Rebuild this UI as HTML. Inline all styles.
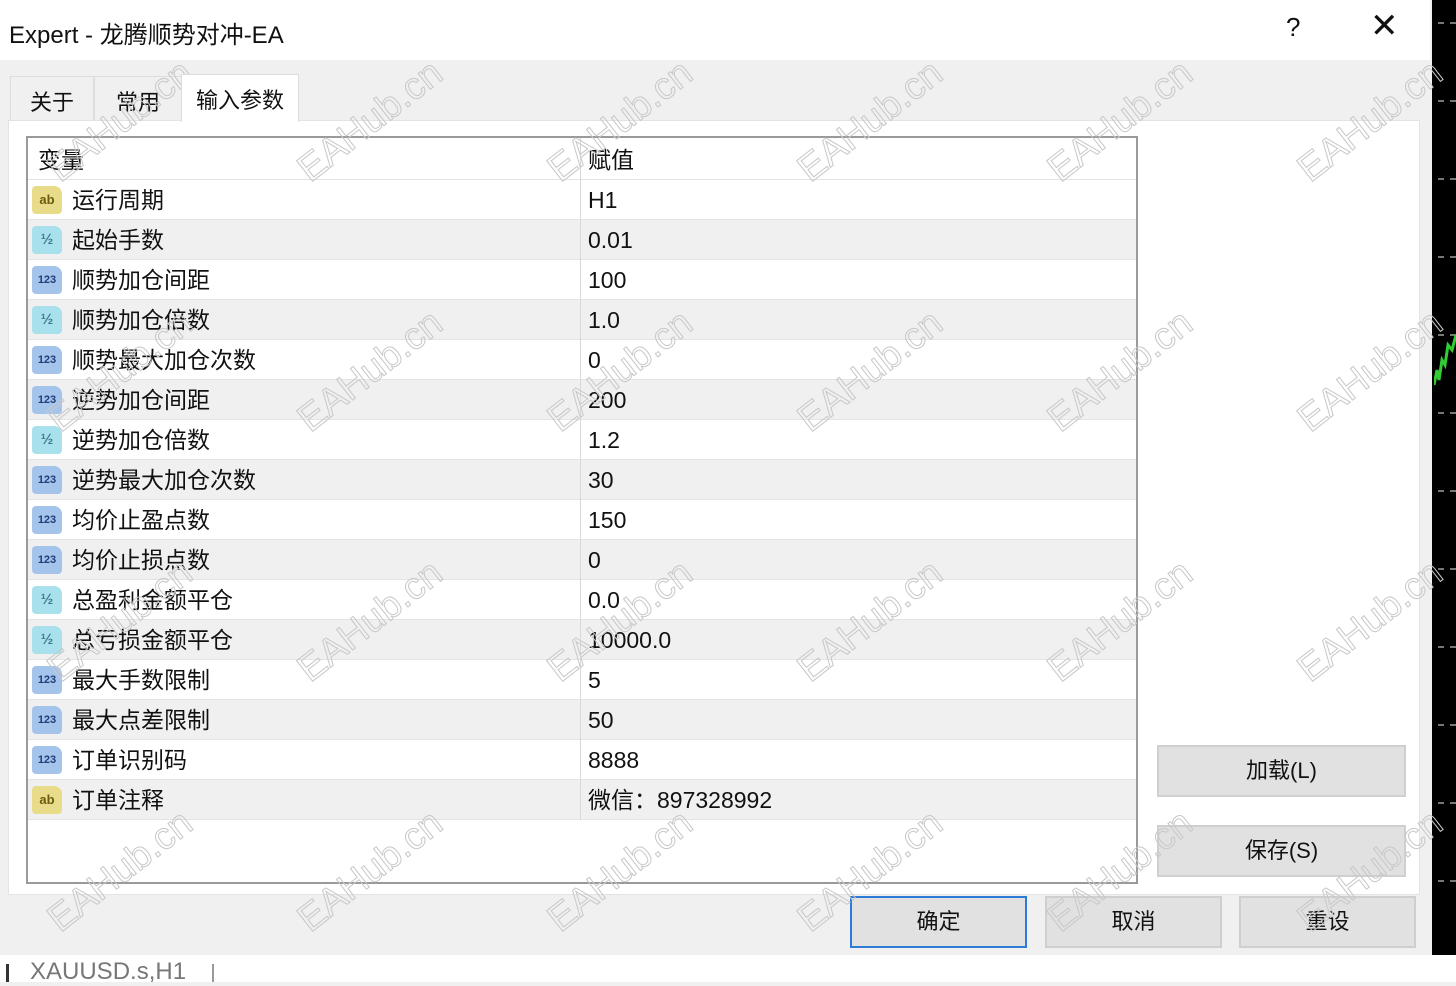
<!DOCTYPE html>
<html><head><meta charset="utf-8"><style>
*{margin:0;padding:0;box-sizing:border-box}
body{width:1456px;height:982px;position:relative;overflow:hidden;background:#f0f0f0;font-family:"Liberation Sans","Noto Sans CJK SC",sans-serif;color:#111}
.abs{position:absolute}
#title{left:0;top:0;width:1430px;height:60px;background:#fff}
#black{left:1432px;top:0;width:24px;height:955px;background:#000}
.dash{position:absolute;left:1438px;width:18px;border-top:2px dashed #777}
#panel{left:8px;top:120px;width:1412px;height:775px;background:#fff;border:1px solid #e3e3e3}
.tab{position:absolute;top:76px;height:45px;font-size:22px;padding-top:8px;text-align:center;background:#f0f0f0;border:1px solid #ddd;border-bottom:none}
#table{left:26px;top:136px;width:1112px;height:748px;border:2px solid #9a9a9a;background:#fff}
.row{position:absolute;left:0;width:1108px;height:40px;font-size:23px;line-height:40px;border-bottom:1px solid #e4e4e4}
.row .n{position:absolute;left:44px;top:0}
.row .v{position:absolute;left:560px;top:0}
.row .div{position:absolute;left:552px;top:0;height:40px;border-left:1px solid #d8d8d8}
.ic{position:absolute;left:4px;top:6px;width:30px;height:28px;border-radius:4px 8px 4px 4px;font-size:13px;font-weight:bold;text-align:center;line-height:28px}
.ab{background:#e8dc8a;color:#6a5c10}
.v2{background:#a8e0ec;color:#3e7f91;font-size:15px}
.n3{background:#a4c4ec;color:#1e3f78;font-size:11px}
.btn{position:absolute;background:#e1e1e1;border:2px solid #cfcfcf;font-size:22px;text-align:center}
.wm{position:absolute;font-size:38px;color:transparent;-webkit-text-stroke:1px #c8c8c8;transform:rotate(-38deg);white-space:nowrap;font-family:"Liberation Sans",sans-serif}
</style></head><body>
<div id="title" class="abs"><span style="position:absolute;left:9px;top:15px;font-size:24px">Expert - 龙腾顺势对冲-EA</span>
<span style="position:absolute;left:1286px;top:12px;font-size:26px">?</span>
<span style="position:absolute;left:1370px;top:6px;font-size:34px;font-weight:200">✕</span></div>
<div id="black" class="abs"></div>
<div class="dash" style="top:22px"></div><div class="dash" style="top:100px"></div><div class="dash" style="top:178px"></div><div class="dash" style="top:256px"></div><div class="dash" style="top:334px"></div><div class="dash" style="top:412px"></div><div class="dash" style="top:490px"></div><div class="dash" style="top:568px"></div><div class="dash" style="top:646px"></div><div class="dash" style="top:724px"></div><div class="dash" style="top:802px"></div><div class="dash" style="top:880px"></div>
<svg class="abs" style="left:1434px;top:330px" width="22" height="60"><polyline points="0,55 3,40 5,50 8,30 11,35 14,15 18,20 22,5" fill="none" stroke="#3c3" stroke-width="3"/></svg>
<div class="tab" style="left:10px;width:84px">关于</div>
<div class="tab" style="left:94px;width:88px">常用</div>
<div class="tab" style="left:181px;top:74px;height:48px;width:118px;background:#fff;z-index:2">输入参数</div>
<div id="panel" class="abs"></div>
<div id="table" class="abs">
<div class="row" style="top:0;height:42px;line-height:44px"><span class="n" style="left:10px">变量</span><span class="v">赋值</span><div class="div" style="height:42px"></div></div>
<div class="row" style="top:42px"><div class="ic ab">ab</div><span class="n">运行周期</span><div class="div"></div><span class="v">H1</span></div>
<div class="row" style="top:82px;background:#f0f0f0"><div class="ic v2">½</div><span class="n">起始手数</span><div class="div"></div><span class="v">0.01</span></div>
<div class="row" style="top:122px"><div class="ic n3">123</div><span class="n">顺势加仓间距</span><div class="div"></div><span class="v">100</span></div>
<div class="row" style="top:162px;background:#f0f0f0"><div class="ic v2">½</div><span class="n">顺势加仓倍数</span><div class="div"></div><span class="v">1.0</span></div>
<div class="row" style="top:202px"><div class="ic n3">123</div><span class="n">顺势最大加仓次数</span><div class="div"></div><span class="v">0</span></div>
<div class="row" style="top:242px;background:#f0f0f0"><div class="ic n3">123</div><span class="n">逆势加仓间距</span><div class="div"></div><span class="v">200</span></div>
<div class="row" style="top:282px"><div class="ic v2">½</div><span class="n">逆势加仓倍数</span><div class="div"></div><span class="v">1.2</span></div>
<div class="row" style="top:322px;background:#f0f0f0"><div class="ic n3">123</div><span class="n">逆势最大加仓次数</span><div class="div"></div><span class="v">30</span></div>
<div class="row" style="top:362px"><div class="ic n3">123</div><span class="n">均价止盈点数</span><div class="div"></div><span class="v">150</span></div>
<div class="row" style="top:402px;background:#f0f0f0"><div class="ic n3">123</div><span class="n">均价止损点数</span><div class="div"></div><span class="v">0</span></div>
<div class="row" style="top:442px"><div class="ic v2">½</div><span class="n">总盈利金额平仓</span><div class="div"></div><span class="v">0.0</span></div>
<div class="row" style="top:482px;background:#f0f0f0"><div class="ic v2">½</div><span class="n">总亏损金额平仓</span><div class="div"></div><span class="v">10000.0</span></div>
<div class="row" style="top:522px"><div class="ic n3">123</div><span class="n">最大手数限制</span><div class="div"></div><span class="v">5</span></div>
<div class="row" style="top:562px;background:#f0f0f0"><div class="ic n3">123</div><span class="n">最大点差限制</span><div class="div"></div><span class="v">50</span></div>
<div class="row" style="top:602px"><div class="ic n3">123</div><span class="n">订单识别码</span><div class="div"></div><span class="v">8888</span></div>
<div class="row" style="top:642px;background:#f0f0f0"><div class="ic ab">ab</div><span class="n">订单注释</span><div class="div"></div><span class="v">微信：897328992</span></div>
</div>
<div class="btn" style="left:1157px;top:745px;width:249px;height:52px;line-height:48px">加载(L)</div>
<div class="btn" style="left:1157px;top:825px;width:249px;height:52px;line-height:48px">保存(S)</div>
<div class="btn" style="left:850px;top:896px;width:177px;height:52px;line-height:48px;border-color:#2c7bd6">确定</div>
<div class="btn" style="left:1045px;top:896px;width:177px;height:52px;line-height:48px">取消</div>
<div class="btn" style="left:1239px;top:896px;width:177px;height:52px;line-height:48px">重设</div>
<div class="abs" style="left:0;top:955px;width:1456px;height:27px;background:#fff"></div>
<div class="abs" style="left:6px;top:964px;width:3px;height:18px;background:#333"></div>
<span class="abs" style="left:30px;top:958px;font-size:24px;color:#777">XAUUSD.s,H1</span>
<div class="abs" style="left:212px;top:964px;width:2px;height:18px;background:#999"></div>
<div class="wm" style="left:35px;top:100px">EAHub.cn</div><div class="wm" style="left:285px;top:100px">EAHub.cn</div><div class="wm" style="left:535px;top:100px">EAHub.cn</div><div class="wm" style="left:785px;top:100px">EAHub.cn</div><div class="wm" style="left:1035px;top:100px">EAHub.cn</div><div class="wm" style="left:1285px;top:100px">EAHub.cn</div>
<div class="wm" style="left:35px;top:350px">EAHub.cn</div><div class="wm" style="left:285px;top:350px">EAHub.cn</div><div class="wm" style="left:535px;top:350px">EAHub.cn</div><div class="wm" style="left:785px;top:350px">EAHub.cn</div><div class="wm" style="left:1035px;top:350px">EAHub.cn</div><div class="wm" style="left:1285px;top:350px">EAHub.cn</div>
<div class="wm" style="left:35px;top:600px">EAHub.cn</div><div class="wm" style="left:285px;top:600px">EAHub.cn</div><div class="wm" style="left:535px;top:600px">EAHub.cn</div><div class="wm" style="left:785px;top:600px">EAHub.cn</div><div class="wm" style="left:1035px;top:600px">EAHub.cn</div><div class="wm" style="left:1285px;top:600px">EAHub.cn</div>
<div class="wm" style="left:35px;top:850px">EAHub.cn</div><div class="wm" style="left:285px;top:850px">EAHub.cn</div><div class="wm" style="left:535px;top:850px">EAHub.cn</div><div class="wm" style="left:785px;top:850px">EAHub.cn</div><div class="wm" style="left:1035px;top:850px">EAHub.cn</div><div class="wm" style="left:1285px;top:850px">EAHub.cn</div>
</body></html>
